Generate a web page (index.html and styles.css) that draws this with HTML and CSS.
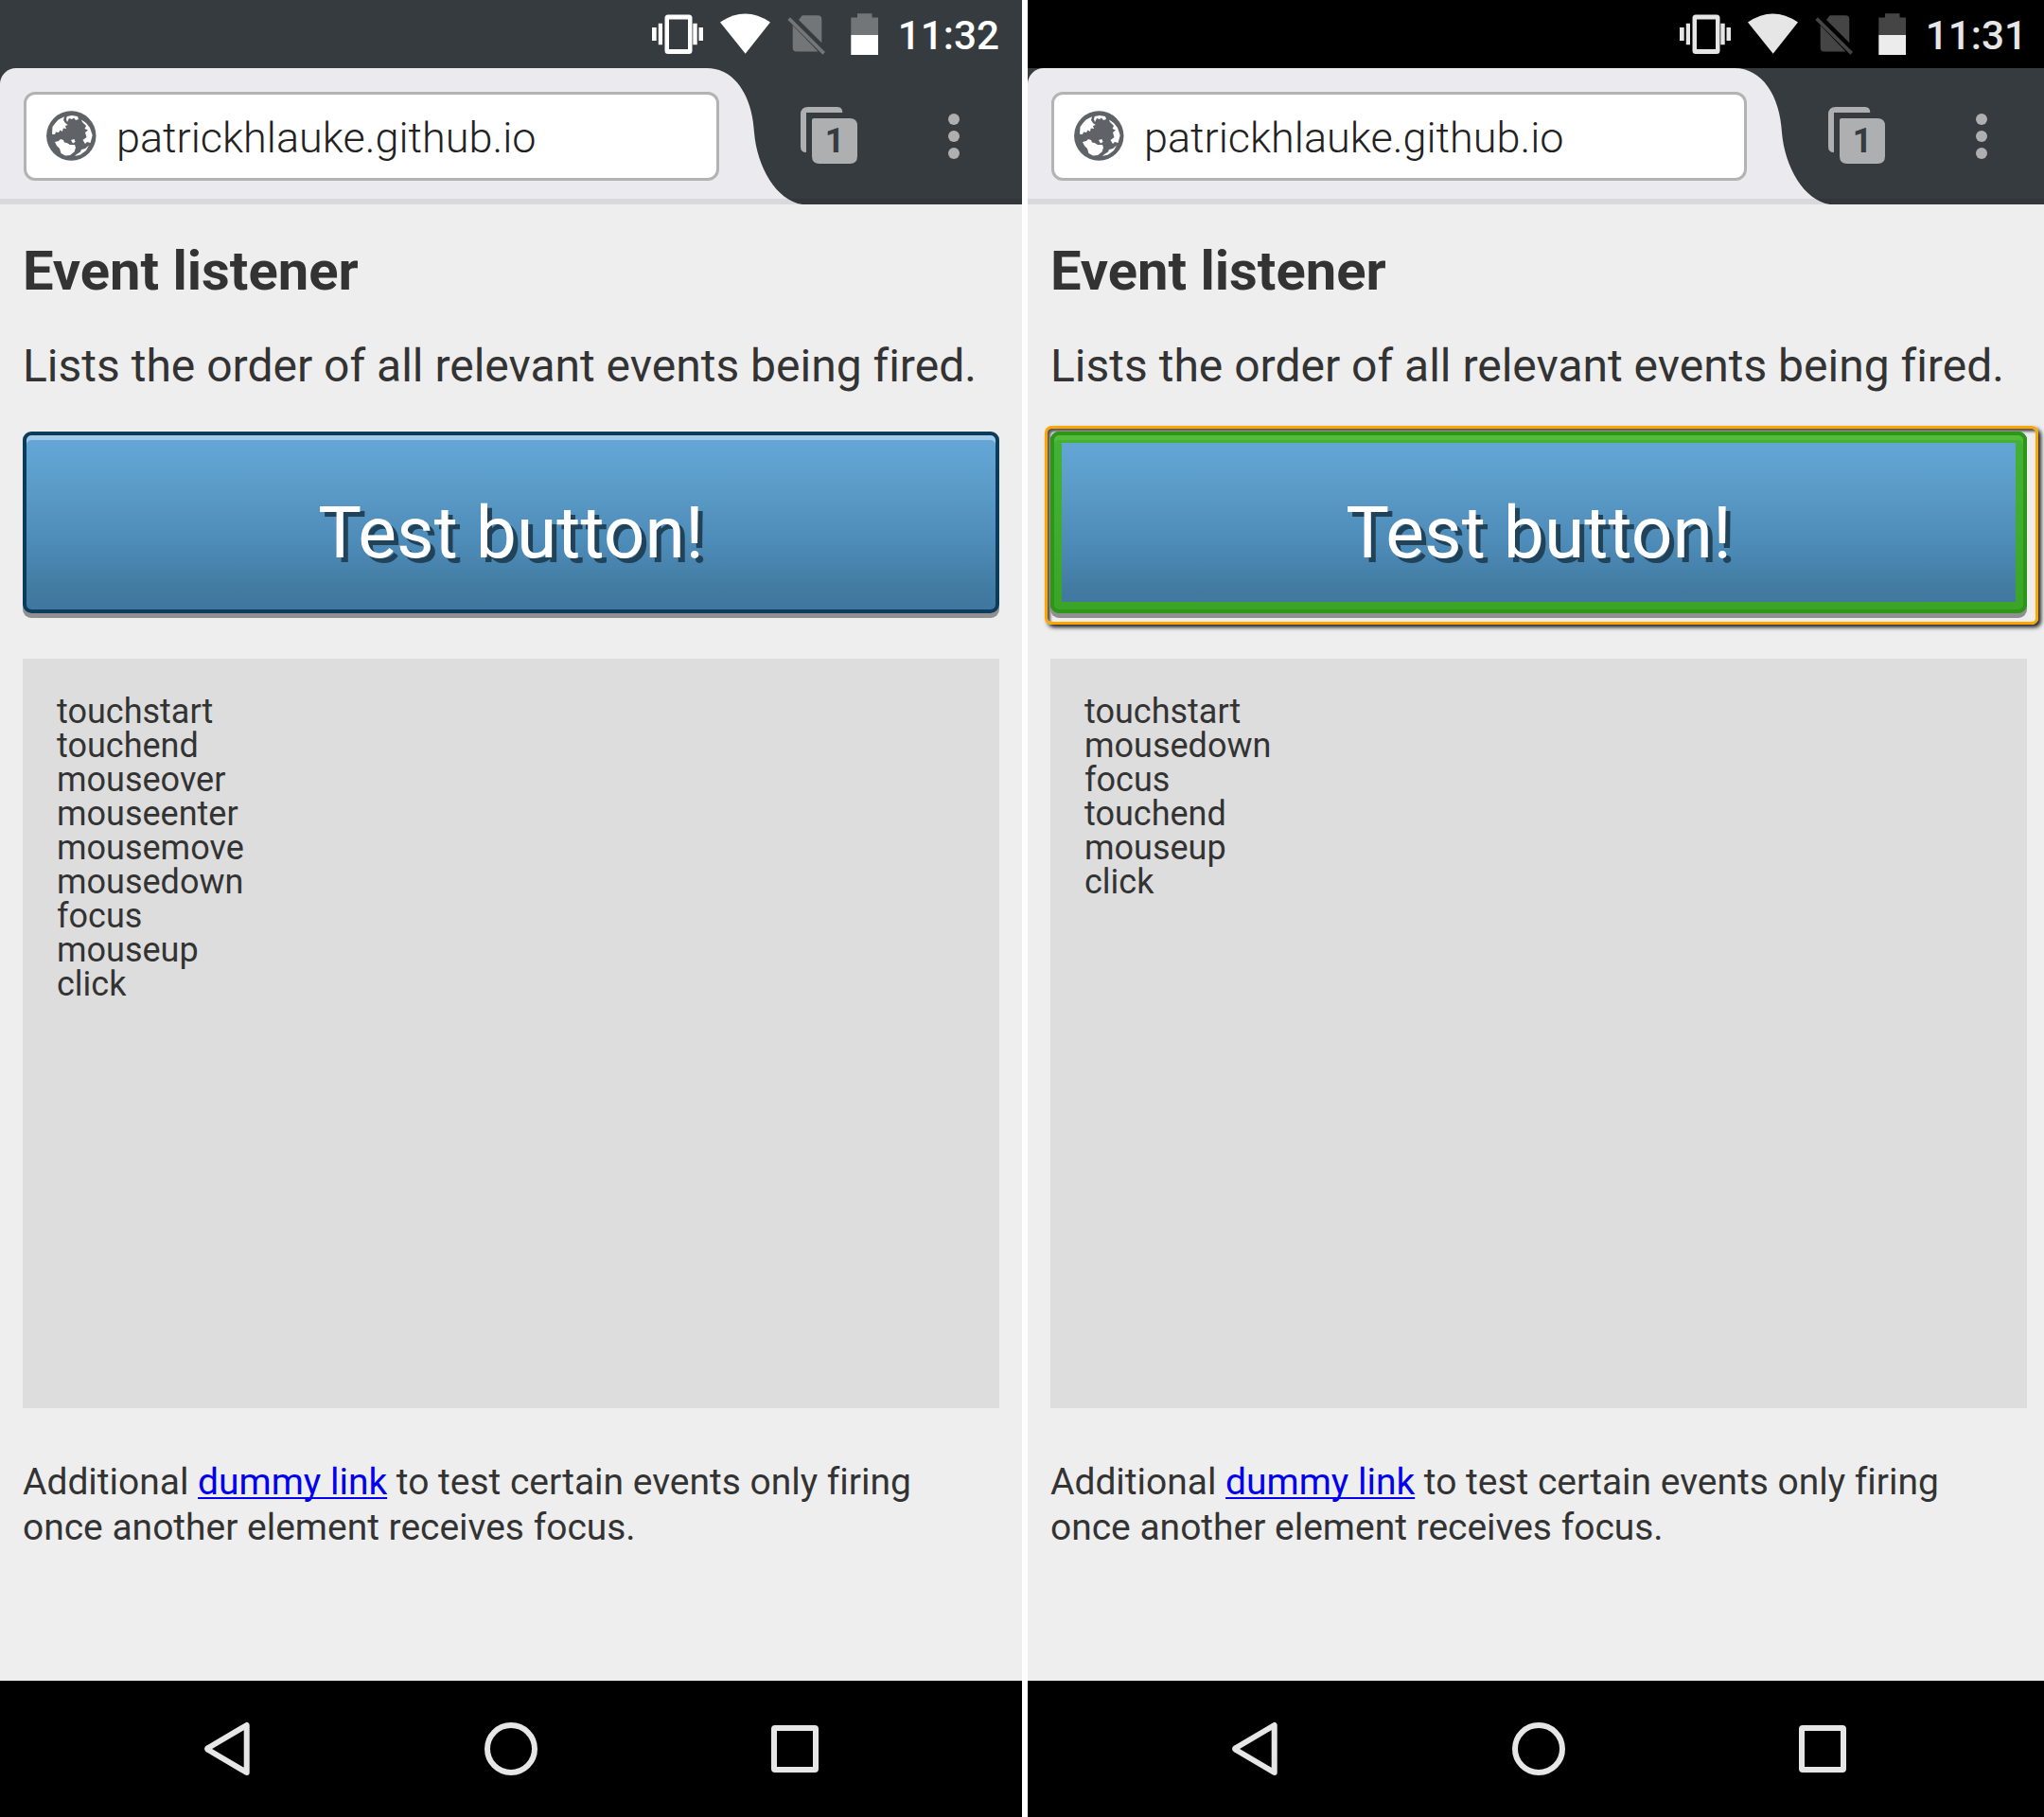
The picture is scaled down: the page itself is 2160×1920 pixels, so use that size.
FILE: index.html
```html
<!DOCTYPE html>
<html lang="en">
<head>
<meta charset="utf-8">
<title>Event listener</title>
<link rel="stylesheet" href="styles.css">
</head>
<body>
<svg class="defs" aria-hidden="true">
  <clipPath id="tab-shape"><path d="M0 144V0H105C134 0 153 29 155 68C158 104 178 140 206 144z"/></clipPath>
  <symbol id="status" viewBox="0 0 246 72">
    <g fill="var(--fg)">
      <path fill-rule="evenodd" d="M17 15.500h22a3.500 3.500 0 0 1 3.500 3.500v34.500a3.500 3.500 0 0 1-3.500 3.500h-22a3.500 3.500 0 0 1-3.500-3.500v-34.500a3.500 3.500 0 0 1 3.500-3.500zM18 20.500v31.500h20v-31.500z"/>
      <path d="M0 29h4.700v14h-4.700zM6.800 24.800h4.200v22.500h-4.200zM43.300 24.800h4.400v22.500h-4.400zM49.500 29h4.500v14h-4.500z"/>
      <path d="M72 23.500Q98.500 5.500 125 23.500L98.700 56.800z"/>
    </g>
    <g fill="var(--dim)">
      <path d="M158.800 16.300h16.500a4 4 0 0 1 4 4v25L155 21zM148.700 26.700L175.500 54.500H152.700a4 4 0 0 1-4-4z"/>
      <path d="M143.400 21l2.500-2.700L183 55l-2.600 2.800z"/>
      <path d="M210.300 18.500h6.700v-4.300h15.500v4.300h6.500v18.500h-28.700z"/>
    </g>
    <path fill="var(--bat)" d="M210.300 37h28.700v21h-28.700z"/>
  </symbol>
  <symbol id="tab" viewBox="0 0 220 144">
    <g clip-path="url(#tab-shape)">
      <rect width="220" height="138" fill="#ebeaef"/>
      <rect y="138" width="220" height="6" fill="#d9d8dd"/>
    </g>
  </symbol>
  <symbol id="tabs" viewBox="0 0 62 62">
    <path fill="#aeafb1" d="M9 1H40Q45.300 1 45.300 7H7V49Q1 49 1 43V9Q1 1 9 1z"/>
    <path fill="#aeafb1" d="M15 13H53Q61 13 61 21V53Q61 61 53 61H21Q13 61 13 53V15Q13 13 15 13z"/>
  </symbol>
  <symbol id="globe" viewBox="0 0 54 54">
    <circle cx="26.300" cy="26.500" r="26.200" fill="#5f6368"/>
    <g fill="#fff">
      <path d="M6 24.700L6.500 17L9.500 13L12.700 9.500L19 6.300L18 10L20 13L22.700 15L20 16L21 19L17.700 18.500L17 22L14.500 20.500L13 23L10 22.500L9 25z"/>
      <path d="M21.700 6L27 5L33 6L34 9L31 10L29 7.500L27 9L24 8L22 12L21 9z"/>
      <path d="M9 33L13 32L15 30L18 31L19 33.500L21.700 34L25 36L30 36L31 39L29.500 43.500L25 47L20 47.500L15.500 45L14 40L11 37z"/>
      <path d="M37 9.500L42 13L46 18L48.700 26L46.500 34L43 33L41 35L38.500 31L42.500 28L41 23L44 20.500L40.500 19L42 16L38 12z"/>
      <path d="M45 36.500L42 42L36 46.500L30 48L32 46L36 43.500L37 41L41 40z"/>
      <path d="M26 31L29.500 30L30.500 33L28 34.500z"/>
    </g>
  </symbol>
  <symbol id="nav" viewBox="0 0 1080 144">
    <g fill="none" stroke="#e6e6e6" stroke-width="6" stroke-linejoin="round">
      <path d="M260.700 47V97L220 73Q218 72 220 71z"/>
      <circle cx="540" cy="72" r="25"/>
      <rect x="818" y="50" width="44" height="44" rx="1"/>
    </g>
  </symbol>
</svg>
<main class="screens">
  <section class="phone tinted">
    <header class="status"><svg class="status-icons"><use href="#status"/></svg><span class="clock">11:32</span></header>
    <div class="toolbar">
      <div class="omnibox"><svg class="globe"><use href="#globe"/></svg><span class="url">patrickhlauke.github.io</span></div>
      <svg class="curve"><use href="#tab"/></svg>
      <div class="tabs"><svg class="tabs-icon"><use href="#tabs"/></svg><span class="count">1</span></div>
      <div class="menu"><i></i><i></i><i></i></div>
    </div>
    <article class="page">
      <h1>Event listener</h1>
      <p class="intro">Lists the order of all relevant events being fired.</p>
      <div class="button">Test button!</div>
      <div class="log">touchstart<br>touchend<br>mouseover<br>mouseenter<br>mousemove<br>mousedown<br>focus<br>mouseup<br>click</div>
      <p class="note">Additional <a href="#">dummy link</a> to test certain events only firing<br>once another element receives focus.</p>
    </article>
    <svg class="nav"><use href="#nav"/></svg>
  </section>
  <section class="phone">
    <header class="status"><svg class="status-icons"><use href="#status"/></svg><span class="clock">11:31</span></header>
    <div class="toolbar">
      <div class="omnibox"><svg class="globe"><use href="#globe"/></svg><span class="url">patrickhlauke.github.io</span></div>
      <svg class="curve"><use href="#tab"/></svg>
      <div class="tabs"><svg class="tabs-icon"><use href="#tabs"/></svg><span class="count">1</span></div>
      <div class="menu"><i></i><i></i><i></i></div>
    </div>
    <article class="page">
      <h1>Event listener</h1>
      <p class="intro">Lists the order of all relevant events being fired.</p>
      <div class="button focused">Test button!</div>
      <div class="log">touchstart<br>mousedown<br>focus<br>touchend<br>mouseup<br>click</div>
      <p class="note">Additional <a href="#">dummy link</a> to test certain events only firing<br>once another element receives focus.</p>
    </article>
    <svg class="nav"><use href="#nav"/></svg>
  </section>
</main>
</body>
</html>
```
FILE: styles.css
```css
*, *::before, *::after { box-sizing: border-box; }
body { margin: 0; background: #fff; font-family: Roboto, sans-serif; color: #333; overflow: hidden; font-variant-ligatures: none; }
.defs { position: absolute; width: 0; height: 0; }
.screens { display: flex; gap: 6px; width: 2160px; height: 1920px; overflow: hidden; }
.phone {
  --fg: #e6e6e6; --bat: #ececec; --dim: #454545; --bar: #000;
  flex: none; width: 1080px; height: 1920px; display: flex; flex-direction: column; background: #eee;
}
.tinted { --fg: #fff; --bat: #fff; --dim: #737679; --bar: #363b3f; }
.status { height: 72px; background: var(--bar); display: flex; justify-content: flex-end; padding-right: 24px; color: var(--fg); }
.status-icons { width: 246px; height: 72px; flex: none; }
.clock { width: 121px; text-align: right; font-size: 42.300px; font-weight: 500; line-height: 76px; white-space: nowrap; }

.toolbar { height: 144px; flex: none; background: linear-gradient(#363b3f 138px, #323539 138px); display: flex; position: relative; }
.omnibox { order: 1; position: relative; z-index: 1; width: 735px; height: 94px; margin: 25px 0 0 25px; border: 3px solid #b3b3b3; border-radius: 12px; background: #fff; display: flex; align-items: center; }
.toolbar::before { content: ""; position: absolute; left: 0; top: 0; width: 700px; height: 144px; background: linear-gradient(#ebeaef 138px, #d9d8dd 138px); border-top-left-radius: 17px; }
.curve { position: absolute; left: 642px; top: 0; width: 220px; height: 144px; }
.globe { width: 54px; height: 54px; margin-left: 20.500px; }
.url { margin-left: 20.500px; padding-top: 2px; font-size: 45px; font-weight: 300; color: #222; white-space: nowrap; }
.tabs { order: 2; position: relative; width: 62px; height: 62px; margin: 40px 0 0 85px; }
.tabs-icon { display: block; width: 62px; height: 62px; }
.count { position: absolute; left: 13px; top: 13px; width: 48px; text-align: center; font-size: 36px; font-weight: 700; line-height: 48px; color: #363b3f; }
.menu { order: 3; margin: 48px 0 0 95px; display: flex; flex-direction: column; gap: 6px; }
.menu i { width: 12px; height: 12px; border-radius: 50%; background: #aeafb1; }

.page { flex: 1; padding: 0 24px; display: flex; flex-direction: column; isolation: isolate; }
h1 { margin: 34px 0 0; font-size: 57.900px; line-height: 72px; font-weight: 700; white-space: nowrap; }
.intro { margin: 35px 0 0; font-size: 48px; line-height: 60px; white-space: nowrap; }
.button {
  width: 1032px; height: 192px; margin-top: 39px; padding-top: 13px; border: 4px solid #0b3c5a; border-radius: 9px;
  background: linear-gradient(#64a8d8, #5a9ac6 33%, #4d8bb8 62%, #427ca2 87%, #4076a0);
  box-shadow: inset 0 5px 0 #a3c9e8, 0 5px 0 #909090;
  color: #fff; font-size: 76.800px; line-height: 180px; text-align: center; text-shadow: 5px 5px 0 #20435a; white-space: nowrap;
}
.focused { position: relative; }
.focused::before { content: ""; position: absolute; inset: -4px; border: 12px solid rgba(57, 180, 0, .75); border-radius: 9px; }
.focused::after { content: ""; position: absolute; z-index: -1; left: -10px; top: -10px; width: 1050px; height: 210px; border: 3px solid #ffa500; border-radius: 7px; box-shadow: 3px 3px 4px #222, inset 3px 3px 3px #555; }
.log { height: 792px; flex: none; margin-top: 48px; padding: 38px 36px 36px; background: #ddd; font-size: 36px; line-height: 36px; }
.note { margin: 54px 0 0; font-size: 38.960px; line-height: 48px; white-space: nowrap; }
.note a { color: #00e; text-decoration: underline; text-decoration-thickness: 2px; text-underline-offset: 3px; text-decoration-skip-ink: none; }
.nav { display: block; flex: none; width: 1080px; height: 144px; background: #000; }
```
